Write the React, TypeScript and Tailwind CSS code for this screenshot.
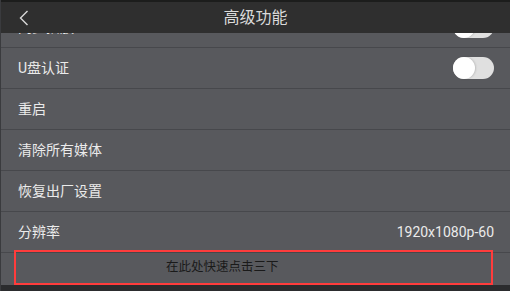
import React from 'react';

const Toggle: React.FC = () => (
  <div className="w-[41px] h-[22px] rounded-full bg-[#e0e0e0] flex items-center">
    <div className="w-[22px] h-[22px] rounded-full bg-white shadow-[1px_0_2px_rgba(0,0,0,0.15)]" />
  </div>
);

const Row: React.FC<{ label: string; right?: React.ReactNode }> = ({ label, right }) => (
  <div className="h-[41px] flex items-center justify-between pl-[17px] pr-[16px] border-b border-[#47484c]">
    <span className="text-[14px] text-[#ebebeb]">{label}</span>
    {right}
  </div>
);

export default function App() {
  return (
    <div
      className="w-[510px] h-[291px] overflow-hidden bg-[#58595d] border-l border-[#3a3b3e] flex flex-col"
      style={{ fontFamily: 'Roboto, "Noto Sans CJK SC", sans-serif' }}
    >
      <div className="h-[2px] bg-[#1c1d1c] shrink-0" />
      <div className="relative z-10 h-[31px] bg-[#2f2f2f] flex items-center shrink-0">
        <svg className="ml-[18px] w-[10px] h-[16px]" viewBox="0 0 10 16">
          <polyline points="8.5,1 1.5,8 8.5,15" fill="none" stroke="#d8d8d8" strokeWidth="1.4" />
        </svg>
        <div className="absolute inset-0 flex items-center justify-center text-[16px] text-[#dadada]">
          高级功能
        </div>
      </div>
      <div className="flex-1 overflow-hidden">
        <div className="-mt-[26px]">
          <Row label="同步播放" right={<Toggle />} />
          <Row label="U盘认证" right={<Toggle />} />
          <Row label="重启" />
          <Row label="清除所有媒体" />
          <Row label="恢复出厂设置" />
          <Row label="分辨率" right={<span className="text-[14px] text-[#ebebeb]">1920x1080p-60</span>} />
          <div className="ml-[13px] mr-[17px] -mt-[3px] h-[35px] border-[2.5px] border-[#ff3c3c] flex items-center pl-[150px]">
            <span className="text-[12.5px] text-[#1a1a1a]">在此处快速点击三下</span>
          </div>
          <div className="h-[20px] bg-[#2b2c2e]" />
        </div>
      </div>
    </div>
  );
}
